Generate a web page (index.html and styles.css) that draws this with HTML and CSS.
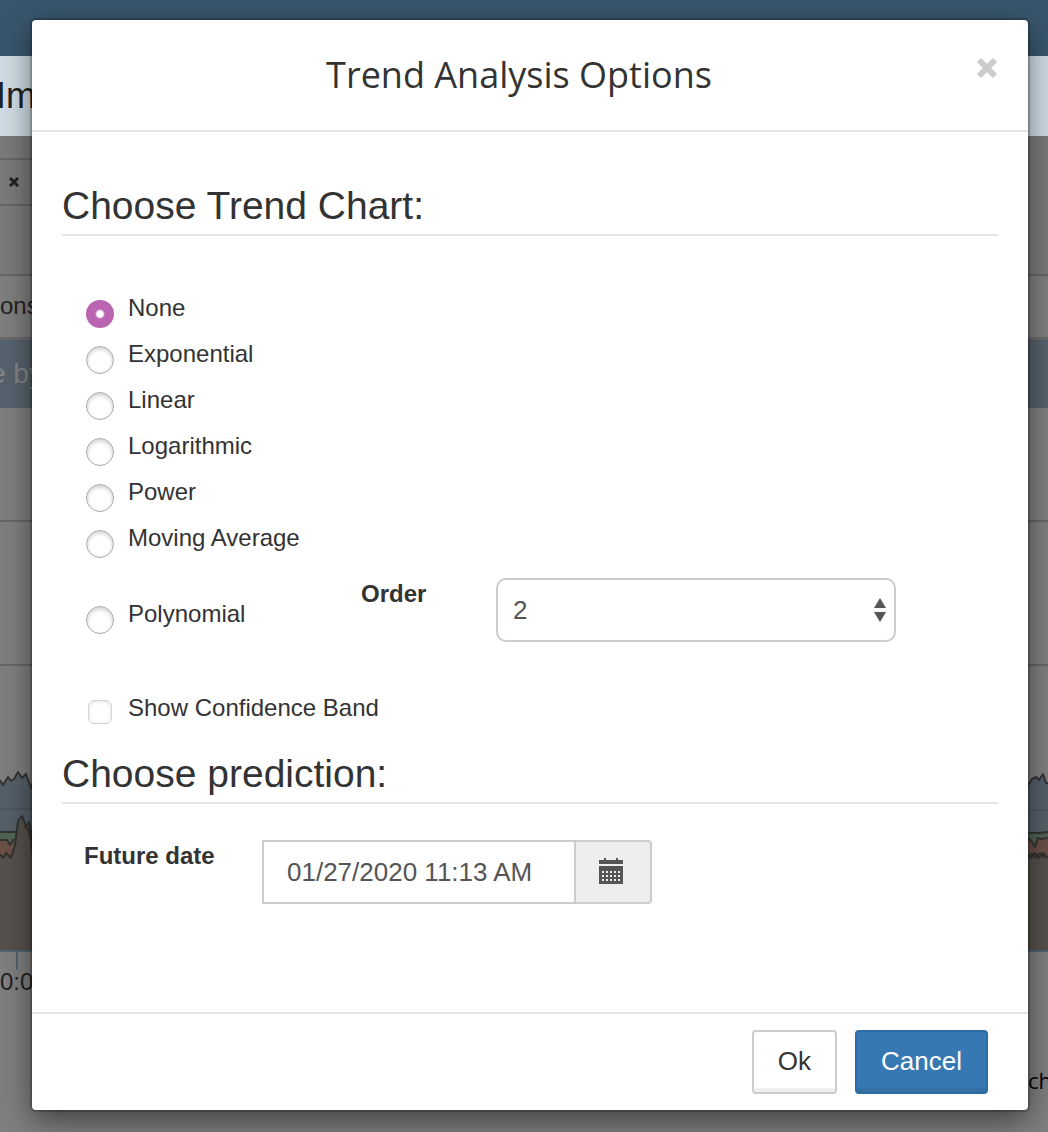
FILE: index.html
```
<!DOCTYPE html>
<html lang="en">
<head>
    <meta charset="UTF-8">
    <meta name="viewport" content="width=device-width, initial-scale=1.0">
    <title>Trend Analysis Options</title>
    <link rel="stylesheet" href="styles.css">
</head>
<body>

<div class="page" aria-hidden="true">
    <div class="topbar"></div>
    <div class="page-title">Im</div>
    <div class="tabs">
        <div class="tab">
            <svg width="10" height="10" viewBox="0 0 10 10"><path d="M1 1L9 9M9 1L1 9" stroke="#222" stroke-width="3"/></svg>
        </div>
    </div>
    <div class="toolbar">ons</div>
    <div class="chart-title">e by</div>

    <div class="chart">
        <svg width="60" height="562" viewBox="0 0 60 562">
            <path d="M0 113H60M0 257H60" stroke="#666" stroke-width="2"/>
            <path d="M0 372L3 377L8 369L11 373L14 371L18 364L22 370L26 366L31 380L36 368L60 370V544H0Z" fill="#566069"/>
            <path d="M0 401H60" stroke="#4c5761" stroke-width="2"/>
            <path d="M0 425H16V455H0Z" fill="#506454"/>
            <path d="M0 432L7 432L10 437L14 431L18 438V450H0ZM26 428L29 416L34 425V446H28Z" fill="#6b5148"/>
            <path d="M0 446L3 450L6 445L11 450L15 437L18 413L22 408L26 418L30 426L33 448L60 440V544H0Z" fill="#56514c"/>
            <path d="M0 372L3 377L8 369L11 373L14 371L18 364L22 370L26 366L31 380L36 368M0 424H16M0 432H7L10 437L14 431M0 446L3 450L6 445L11 450L15 437L18 413L22 408L26 418L30 426L33 448M25 420L29 414L34 440" fill="none" stroke="#333" stroke-width="2" stroke-linejoin="round"/>
            <path d="M0 543H60M17 543V562" stroke="#536272" stroke-width="2"/>
        </svg>
        <svg width="60" height="562" viewBox="0 0 60 562">
            <path d="M0 113H60M0 257H60" stroke="#666" stroke-width="2"/>
            <path d="M38 380L44 371L48 369L51 372L55 366L58 375L60 375V544H38Z" fill="#566069"/>
            <path d="M38 402H60" stroke="#4c5761" stroke-width="2"/>
            <path d="M38 425H60V455H38Z" fill="#506454"/>
            <path d="M38 430L42 431L47 439L50 430L54 431L60 430V455H38Z" fill="#6b5148"/>
            <path d="M38 446L43 450L47 445L51 450L55 445L60 450V544H38Z" fill="#56514c"/>
            <path d="M38 380L44 371L48 369L51 372L55 366L58 375H60M38 425H52L60 424M38 430L42 431L47 439L50 430L54 431L60 430M38 445L43 450L47 445L51 450L55 445L60 450M40 450L44 445L48 450L52 445L57 450" fill="none" stroke="#333" stroke-width="2" stroke-linejoin="round"/>
            <path d="M38 543H60" stroke="#536272" stroke-width="2"/>
        </svg>
    </div>
    <div class="axis-label">0:00</div>
    <div class="legend">ch</div>
</div>

<div class="modal" role="dialog" aria-labelledby="modal-title">
    <div class="modal-header">
        <h1 id="modal-title">Trend Analysis Options</h1>
        <button type="button" class="close" aria-label="Close">
            <svg width="22" height="22" viewBox="0 0 22 22"><path d="M3 3L19 19M19 3L3 19" stroke="#ccc" stroke-width="6"/></svg>
        </button>
    </div>

    <form class="modal-body">
        <h2>Choose Trend Chart:</h2>
        <div class="trend-options">
            <label class="option"><input type="radio" name="trend" checked>None</label>
            <label class="option"><input type="radio" name="trend">Exponential</label>
            <label class="option"><input type="radio" name="trend">Linear</label>
            <label class="option"><input type="radio" name="trend">Logarithmic</label>
            <label class="option"><input type="radio" name="trend">Power</label>
            <label class="option"><input type="radio" name="trend">Moving Average</label>

            <div class="polynomial">
                <label class="option"><input type="radio" name="trend">Polynomial</label>
                <label class="field-label" for="order">Order</label>
                <div class="select">
                    <select id="order">
                        <option>2</option>
                        <option>3</option>
                        <option>4</option>
                    </select>
                    <svg class="arrows" width="12" height="24" viewBox="0 0 12 24"><path d="M6 0L12 10H0ZM6 24L12 14H0Z" fill="#555"/></svg>
                </div>
            </div>

            <label class="option confidence"><input type="checkbox">Show Confidence Band</label>
        </div>

        <h2>Choose prediction:</h2>
        <div class="future">
            <label class="field-label" for="future-date">Future date</label>
            <div class="date-group">
                <input type="text" id="future-date" value="01/27/2020 11:13 AM">
                <button type="button" aria-label="Pick a date">
                    <svg width="24" height="26" viewBox="0 0 24 26">
                        <path d="M0 2H5V0H7V2H17V0H19V2H24V6H0ZM0 8H24V26H0Z" fill="#555"/>
                        <path d="M3 14H22M3 18H22M3 22H22" stroke="#eee" stroke-width="2" stroke-dasharray="2 2"/>
                    </svg>
                </button>
            </div>
        </div>
    </form>

    <div class="modal-footer">
        <button type="button" class="btn">Ok</button>
        <button type="button" class="btn btn-primary">Cancel</button>
    </div>
</div>

</body>
</html>
```

FILE: styles.css
```
* {
    box-sizing: border-box;
}

body {
    margin: 0;
    position: relative;
    overflow: hidden;
    background: #7f7f7f;
    color: #333;
    font-family: "Liberation Sans", Arial, sans-serif;
    font-size: 24px;
}

/* page behind the dialog */
.page {
    min-height: 100vh;
    color: #222;
}

.topbar {
    height: 56px;
    background: #39566c;
}

.page-title {
    height: 80px;
    background: #d0dce5;
    font-size: 36px;
    line-height: 80px;
    text-indent: -4px;
}

.tabs {
    height: 140px;
    padding-top: 22px;
    background: #7a7a7a;
    border-bottom: 2px solid #666;
}

.tab {
    display: flex;
    align-items: center;
    width: 50%;
    height: 48px;
    padding-left: 9px;
    border: solid #666;
    border-width: 2px 0;
}

.toolbar {
    height: 64px;
    line-height: 60px;
    border-bottom: 3px solid #6b6b6b;
}

.chart-title {
    height: 68px;
    background: #56626d;
    color: #858585;
    font-size: 28px;
    line-height: 68px;
    text-indent: -10px;
}

.chart {
    display: flex;
    justify-content: space-between;
}

.axis-label {
    line-height: 24px;
}

.legend {
    margin-right: -4px;
    padding: 70px 0 34px;
    color: #000;
    font-family: "Open Sans", sans-serif;
    font-size: 22px;
    line-height: 32px;
    text-align: right;
}

/* dialog */
.modal {
    position: absolute;
    top: 20px;
    left: 32px;
    right: 20px;
    background: #fff;
    border-radius: 4px;
    box-shadow: 0 0 0 2px rgba(0, 0, 0, 0.2), 0 10px 30px rgba(0, 0, 0, 0.5);
}

.modal-header {
    display: flex;
    align-items: flex-start;
    padding: 30px;
    border-bottom: 2px solid #e5e5e5;
}

h1 {
    flex: 1;
    margin: 0;
    font-family: "Open Sans", sans-serif;
    font-size: 36px;
    font-weight: 400;
    line-height: 50px;
    text-align: center;
}

.close {
    display: flex;
    margin-top: 7px;
    padding: 0;
    border: none;
    background: none;
    cursor: pointer;
}

.modal-body {
    padding: 52px 30px 108px;
}

h2 {
    margin: 0;
    padding-bottom: 6px;
    border-bottom: 2px solid #e5e5e5;
    font-size: 39px;
    font-weight: 400;
    line-height: 44px;
}

.trend-options {
    padding: 55px 24px 15px;
}

.option {
    display: flex;
    align-items: flex-start;
    gap: 14px;
    height: 46px;
    line-height: 34px;
}

input[type="radio"],
input[type="checkbox"] {
    appearance: none;
    flex: none;
    width: 28px;
    height: 28px;
    margin: 9px 0 0;
    border: 1px solid #aaa;
    border-radius: 50%;
    background: #fff;
    box-shadow: inset 0 2px 4px rgba(0, 0, 0, 0.2);
}

input[type="radio"]:checked {
    border: none;
    background: radial-gradient(circle, #fff 3px, #bb64b1 5px);
    box-shadow: none;
}

input[type="checkbox"] {
    width: 24px;
    height: 24px;
    margin: 9px 2px 0;
    border-color: #d5d5d5;
    border-radius: 6px;
    box-shadow: inset 0 1px 4px rgba(0, 0, 0, 0.1);
}

.polynomial {
    display: grid;
    grid-template-columns: 275px 135px 400px;
    margin-top: 11px;
}

.polynomial .option {
    margin-top: 19px;
}

.field-label {
    font-weight: 700;
    line-height: 32px;
}

.select {
    position: relative;
}

select {
    appearance: none;
    width: 100%;
    height: 64px;
    padding: 0 15px;
    border: 2px solid #ccc;
    border-radius: 10px;
    background: #fff;
    color: #555;
    font: inherit;
    font-size: 26px;
}

.arrows {
    position: absolute;
    top: 20px;
    right: 10px;
    pointer-events: none;
}

.confidence {
    margin-top: 48px;
}

.future {
    display: grid;
    grid-template-columns: 178px 390px;
    padding: 36px 22px 0;
}

.date-group {
    display: flex;
    height: 64px;
}

.date-group input {
    flex: 1;
    min-width: 0;
    padding: 0 23px;
    border: 2px solid #ccc;
    border-right: none;
    color: #555;
    font: inherit;
    font-size: 26px;
}

.date-group button {
    display: flex;
    align-items: center;
    justify-content: center;
    width: 78px;
    padding: 0 4px 2px 0;
    border: 2px solid #ccc;
    border-radius: 0 4px 4px 0;
    background: #eee;
}

.modal-footer {
    display: flex;
    justify-content: flex-end;
    gap: 18px;
    padding: 16px 40px;
    border-top: 2px solid #e5e5e5;
}

.btn {
    height: 64px;
    padding: 0 24px 2px;
    border: 2px solid #ccc;
    border-radius: 4px;
    background: #fff;
    box-shadow: inset 0 -4px 0 #f0f0f0;
    color: #333;
    font: inherit;
    font-size: 26px;
    cursor: pointer;
}

.btn-primary {
    border-color: #2e6da4;
    background: #3678b1;
    box-shadow: inset 0 -4px 0 #3270a6;
    color: #fff;
}
```
